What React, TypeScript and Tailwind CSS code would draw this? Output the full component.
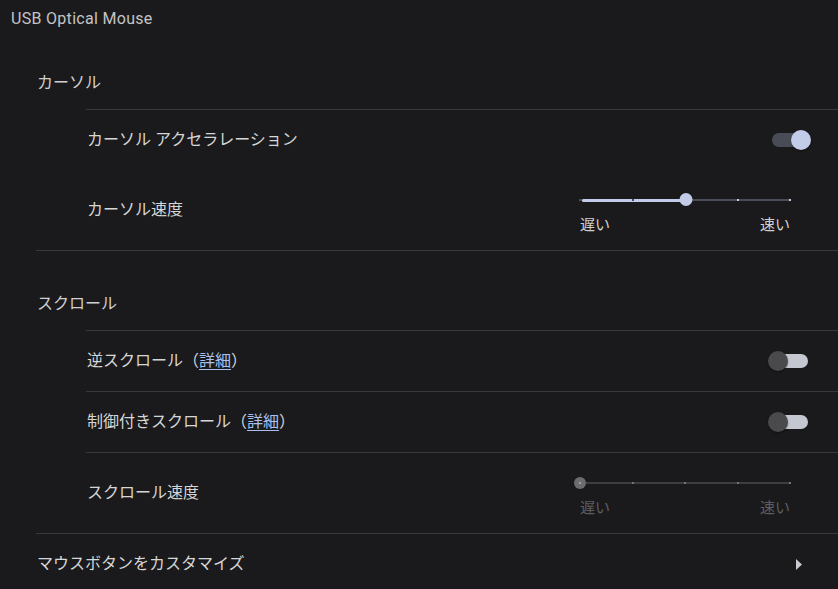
import React from "react";

const FONT = { fontFamily: 'Roboto, "Noto Sans CJK JP", "Noto Sans", sans-serif' };

function Toggle({ on }: { on: boolean }) {
  return (
    <div className="relative h-[20px] w-[43px] shrink-0">
      <div
        className={
          "absolute left-[4px] top-[3px] h-[14px] w-[36px] rounded-full " +
          (on ? "bg-[#484c56]" : "bg-[#c5c8d0]")
        }
      />
      <div
        className={
          "absolute top-0 h-[20px] w-[20px] rounded-full shadow-[0_1px_2px_rgba(0,0,0,0.4)] " +
          (on ? "left-[23px] bg-[#c2cce8]" : "left-0 bg-[#4a4a4d]")
        }
      />
    </div>
  );
}

function Slider({ value, disabled }: { value: number; disabled?: boolean }) {
  const ticks = [0, 1, 2, 3, 4];
  const pct = (i: number) => (i / 4) * 100;
  return (
    <div className="mr-[48px] flex w-[210px] shrink-0 flex-col">
      <div className="relative h-[14px] w-[210px]">
        <div
          className={
            "absolute left-0 right-0 top-[6px] h-[2px] " +
            (disabled ? "bg-[#3d3d40]" : "bg-[#484c56]")
          }
        />
        {!disabled && (
          <div
            className="absolute left-[2px] top-[5.5px] h-[3px] rounded-full bg-[#c2cce8]"
            style={{ width: `calc(${pct(value)}% - 2px)` }}
          />
        )}
        {ticks.map((i) => (
          <div
            key={i}
            className={
              "absolute top-[6px] h-[2px] w-[2px] -translate-x-1/2 " +
              (disabled
                ? "bg-[#747477]"
                : i < value
                ? "bg-[#484c56]"
                : "bg-[#c2cce8]")
            }
            style={{ left: `${pct(i)}%` }}
          />
        ))}
        {disabled ? (
          <div
            className="absolute top-[1px] flex h-[12px] w-[12px] -translate-x-1/2 items-center justify-center rounded-full bg-[#6c6c6f]"
            style={{ left: `${pct(value)}%` }}
          >
            <div className="h-[2px] w-[2px] bg-[#a0a0a3]" />
          </div>
        ) : (
          <div
            className="absolute top-0 h-[13px] w-[13px] -translate-x-1/2 rounded-full bg-[#c2cce8]"
            style={{ left: `calc(${pct(value)}% + 0.5px)` }}
          />
        )}
      </div>
      <div
        className={
          "mt-[8px] flex justify-between text-[15px] leading-[20px] " +
          (disabled ? "text-[#5d5d61]" : "text-[#d0d0d0]")
        }
      >
        <span>遅い</span>
        <span>速い</span>
      </div>
    </div>
  );
}

function Link({ children }: { children: React.ReactNode }) {
  return <span className="text-[#a9c0f0] underline underline-offset-[3px]">{children}</span>;
}

export default function App() {
  return (
    <div className="min-h-[589px] w-full bg-[#1a1a1c] text-[16px] text-[#d6d6d6]" style={FONT}>
      <div className="flex h-[38px] items-center pl-[11px] tracking-[0.3px] text-[#c4c4c4]">USB Optical Mouse</div>

      {/* Cursor section */}
      <div className="ml-[36px]">
        <div className="mt-[15px] flex h-[56px] items-center pl-[1px] pt-[4px] text-[#d0d0d0]">カーソル</div>
        <div className="ml-[50px]">
          <div className="flex h-[61px] items-center justify-between border-t border-[#38383b] pl-[1px] pr-[27px]">
            <span>カーソル アクセラレーション</span>
            <Toggle on />
          </div>
          <div className="flex h-[80px] items-center justify-between pl-[1px]">
            <span>カーソル速度</span>
            <div className="mt-[8px]">
              <Slider value={2} />
            </div>
          </div>
        </div>
      </div>

      {/* Scroll section */}
      <div className="ml-[36px] border-t border-[#38383b]">
        <div className="mt-[23px] flex h-[56px] items-center pl-[1px] pt-[4px] text-[#d0d0d0]">スクロール</div>
        <div className="ml-[50px]">
          <div className="flex h-[61px] items-center justify-between border-t border-[#38383b] pl-[1px] pr-[27px]">
            <span>
              逆スクロール（<Link>詳細</Link>）
            </span>
            <Toggle on={false} />
          </div>
          <div className="flex h-[61px] items-center justify-between border-t border-[#38383b] pl-[1px] pr-[27px]">
            <span>
              制御付きスクロール（<Link>詳細</Link>）
            </span>
            <Toggle on={false} />
          </div>
          <div className="flex h-[81px] items-center justify-between border-t border-[#38383b] pl-[1px]">
            <span>スクロール速度</span>
            <div className="mt-[7px]">
              <Slider value={0} disabled />
            </div>
          </div>
        </div>
      </div>

      <div className="ml-[36px] flex h-[57px] items-center justify-between border-t border-[#38383b] pl-[1px] pr-[36px] pt-[3px]">
        <span>マウスボタンをカスタマイズ</span>
        <svg width="6" height="11" viewBox="0 0 6 11" className="mt-[1px]">
          <path d="M0 0 L6 5.5 L0 11 Z" fill="#c8cad0" />
        </svg>
      </div>
    </div>
  );
}
